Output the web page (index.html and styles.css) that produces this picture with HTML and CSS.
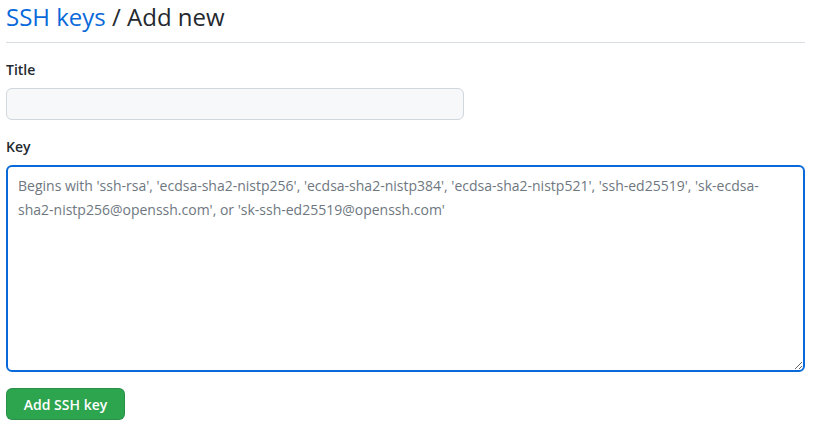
FILE: index.html
```html
<!DOCTYPE html>
<html>
<head>
<meta charset="utf-8">
<link rel="stylesheet" href="styles.css">
</head>
<body>
<div class="page">
  <h2 class="subhead"><a href="#" class="crumb">SSH keys</a> / Add new</h2>
  <form class="form">
    <div class="group">
      <label class="label">Title</label>
      <input class="input" type="text">
    </div>
    <div class="group group-key">
      <label class="label">Key</label>
      <textarea class="textarea" placeholder="Begins with 'ssh-rsa', 'ecdsa-sha2-nistp256', 'ecdsa-sha2-nistp384', 'ecdsa-sha2-nistp521', 'ssh-ed25519', 'sk-ecdsa-sha2-nistp256@openssh.com', or 'sk-ssh-ed25519@openssh.com'"></textarea>
    </div>
    <button class="btn" type="button">Add SSH key</button>
  </form>
</div>
</body>
</html>
```
FILE: styles.css
```css
* { box-sizing: border-box; }
html, body { margin: 0; padding: 0; background: #fff; }
body {
  font-family: "Open Sans", "Noto Sans", "Liberation Sans", sans-serif;
  color: #24292f;
  font-size: 14px;
}
.page {
  padding: 0 10px 0 6px;
}
.subhead {
  margin: 0;
  padding: 1px 0 9px;
  font-size: 24px;
  font-weight: 400;
  line-height: 32px;
  border-bottom: 1px solid #d8dee4;
}
.crumb { color: #0969da; text-decoration: none; }
.form { padding-top: 17px; }
.group { display: flex; flex-direction: column; margin-bottom: 17px; }
.group-key { margin-bottom: 16px; }
.label {
  font-weight: 600;
  font-size: 14px;
  line-height: 20px;
  margin-bottom: 8px;
}
.input {
  width: 458px;
  height: 32px;
  background: #f6f8fa;
  border: 1px solid #d0d7de;
  border-radius: 6px;
  font: inherit;
}
.textarea {
  width: 100%;
  height: 207px;
  border: 2px solid #0969da;
  border-radius: 6px;
  padding: 7px 10px;
  font: inherit;
  font-size: 14px;
  line-height: 24px;
  outline: none;
  resize: vertical;
  margin: 0;
}
.textarea::placeholder { color: #6e7781; }
.btn {
  display: block;
  width: 119px;
  height: 32px;
  background: #2da44e;
  color: #fff;
  border: 1px solid rgba(27,31,36,0.15);
  border-radius: 6px;
  font: inherit;
  font-weight: 600;
  font-size: 14px;
}
```
